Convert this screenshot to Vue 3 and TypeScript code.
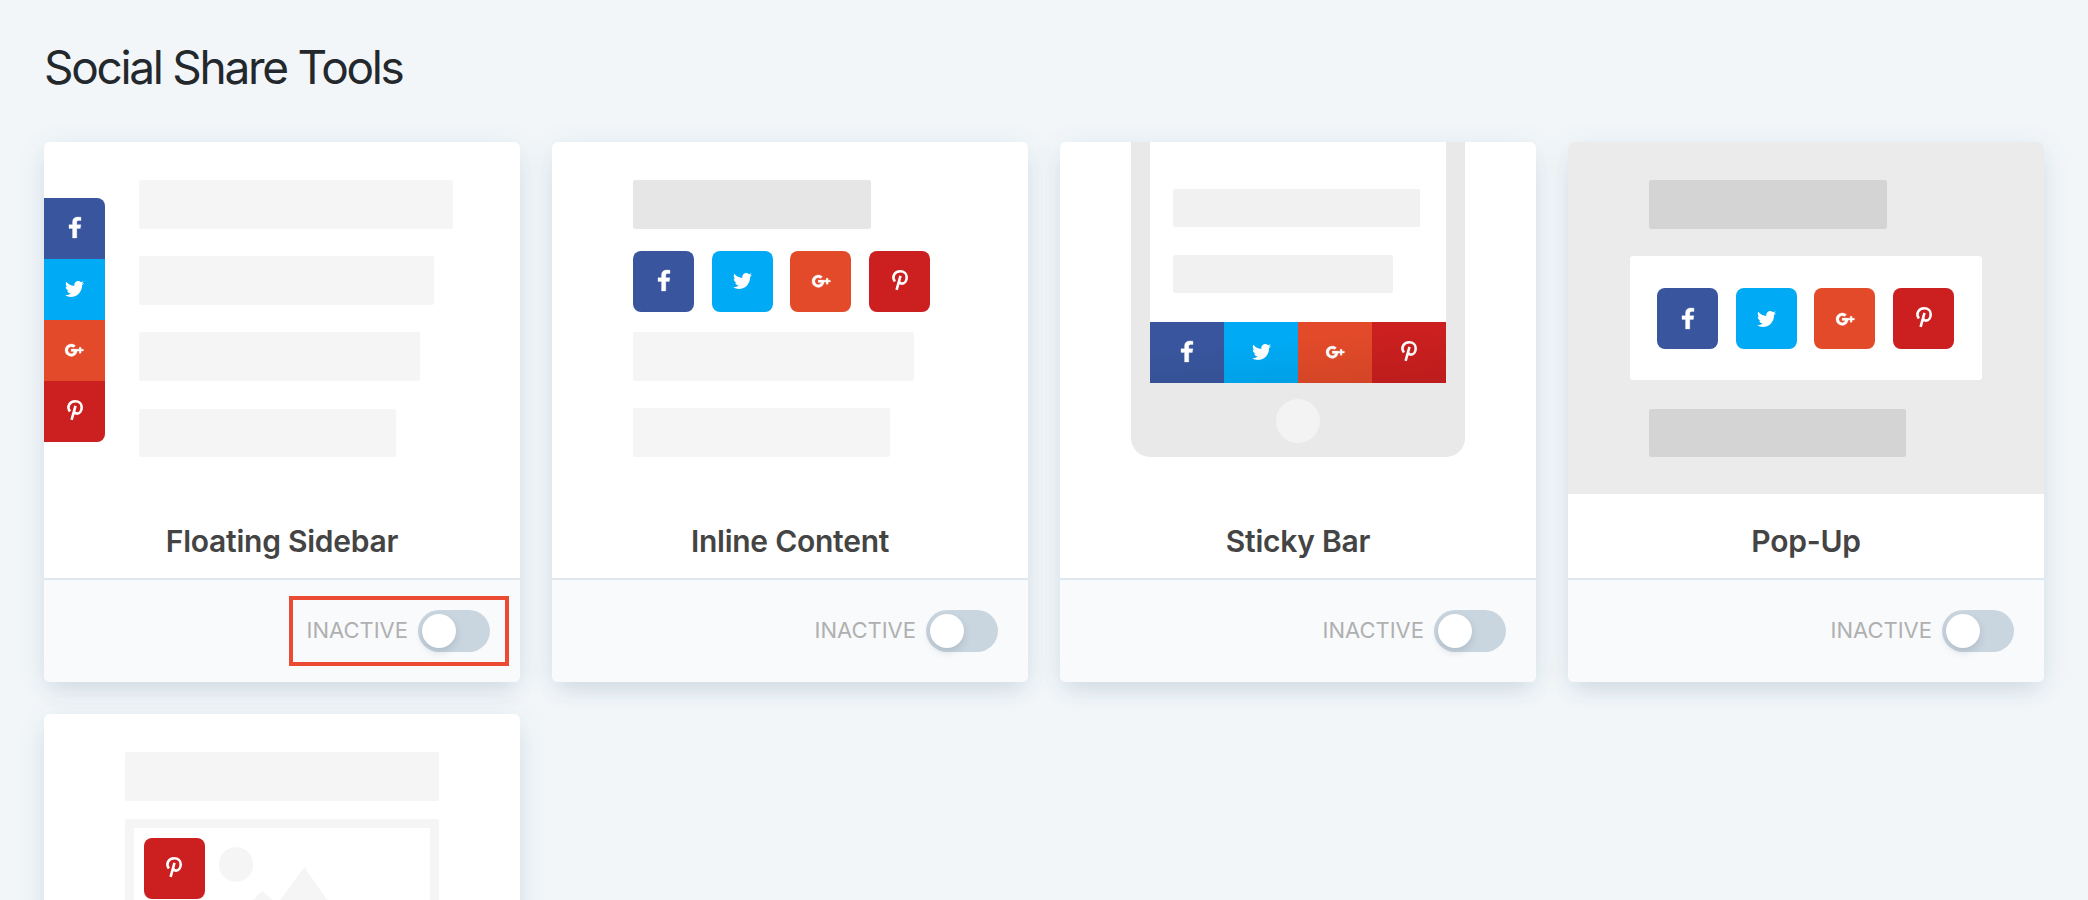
<!--
  Social Share Tools
  Grid of share tool cards: illustration, name and an on/off toggle.
-->
<template>
  <main class="page">
    <h1 class="page-title">Social Share Tools</h1>

    <div class="tools">
      <section v-for="tool in tools" :key="tool.id" class="card">
        <div class="preview" :class="`preview-${tool.id}`">
          <template v-if="tool.id === 'sidebar'">
            <div class="share-stack">
              <span v-for="n in networks" :key="n.id" class="tile" :class="`tile-${n.id}`">
                <svg :class="`icon-${n.id}`" :viewBox="n.viewBox" preserveAspectRatio="none"><path :d="n.path" /></svg>
              </span>
            </div>
            <div class="lines">
              <div v-for="w in [314, 295, 281, 257]" :key="w" class="line" :style="{ width: `${w}px` }"></div>
            </div>
          </template>

          <template v-else-if="tool.id === 'inline'">
            <div class="line line-dark"></div>
            <div class="share-row">
              <span v-for="n in networks" :key="n.id" class="tile" :class="`tile-${n.id}`">
                <svg :class="`icon-${n.id}`" :viewBox="n.viewBox" preserveAspectRatio="none"><path :d="n.path" /></svg>
              </span>
            </div>
            <div class="lines">
              <div v-for="w in [281, 257]" :key="w" class="line" :style="{ width: `${w}px` }"></div>
            </div>
          </template>

          <div v-else-if="tool.id === 'sticky'" class="phone">
            <div class="screen">
              <div v-for="w in [247, 220]" :key="w" class="line" :style="{ width: `${w}px` }"></div>
            </div>
            <div class="sticky-bar">
              <span v-for="n in networks" :key="n.id" class="tile" :class="`tile-${n.id}`">
                <svg :class="`icon-${n.id}`" :viewBox="n.viewBox" preserveAspectRatio="none"><path :d="n.path" /></svg>
              </span>
            </div>
            <div class="home-button"></div>
          </div>

          <template v-else-if="tool.id === 'popup'">
            <div class="line line-short"></div>
            <div class="dialog">
              <div class="share-row">
                <span v-for="n in networks" :key="n.id" class="tile" :class="`tile-${n.id}`">
                  <svg :class="`icon-${n.id}`" :viewBox="n.viewBox" preserveAspectRatio="none"><path :d="n.path" /></svg>
                </span>
              </div>
            </div>
            <div class="line line-long"></div>
          </template>

          <template v-else>
            <div class="line"></div>
            <div class="picture">
              <span class="tile tile-pinterest">
                <svg class="icon-pinterest" :viewBox="pinterest.viewBox" preserveAspectRatio="none"><path :d="pinterest.path" /></svg>
              </span>
              <svg class="scenery" width="170" height="120" viewBox="0 0 170 120">
                <circle cx="31" cy="26.5" r="17.2" />
                <path d="M99.3 29 L161 118 H0 V109 L57.2 53 L72.4 66 Z" />
              </svg>
            </div>
          </template>
        </div>

        <template v-if="tool.name">
          <h2 class="card-title">{{ tool.name }}</h2>

          <div class="card-footer">
            <div class="status" :class="{ highlighted: tool.highlighted }">
              <span class="status-label">{{ tool.active ? 'ACTIVE' : 'INACTIVE' }}</span>
              <button
                type="button"
                class="toggle"
                :class="{ on: tool.active }"
                role="switch"
                :aria-checked="tool.active"
                @click="tool.active = !tool.active"
              >
                <span class="knob"></span>
              </button>
            </div>
          </div>
        </template>
      </section>
    </div>
  </main>
</template>

<script setup lang="ts">
import { reactive } from 'vue'

interface Tool {
  id: 'sidebar' | 'inline' | 'sticky' | 'popup' | 'image'
  name?: string
  active: boolean
  highlighted?: boolean
}

interface Network {
  id: string
  viewBox: string
  path: string
}

const tools = reactive<Tool[]>([
  { id: 'sidebar', name: 'Floating Sidebar', active: false, highlighted: true },
  { id: 'inline', name: 'Inline Content', active: false },
  { id: 'sticky', name: 'Sticky Bar', active: false },
  { id: 'popup', name: 'Pop-Up', active: false },
  { id: 'image', active: false },
])

// Stroked rather than filled, see .icon-pinterest
const pinterest: Network = {
  id: 'pinterest',
  viewBox: '0 0 16 21',
  path: 'M2.9 11.4C-0.6 6.6 2.6 1.3 8.2 1.3C12 1.3 14.7 3.7 14.7 7.2C14.7 10.9 12.7 13.6 10 13.6C8.6 13.6 7.6 12.9 7.2 11.8M8.5 5.8L4.6 19.8',
}

const networks: Network[] = [
  {
    id: 'facebook',
    viewBox: '479 0 864 1664',
    path: 'M1343 12v264h-157q-86 0-116 36t-30 108v189h293l-39 296h-254v759H734V905H479V609h255V391q0-186 104-288.5T1115 0q147 0 228 12z',
  },
  {
    id: 'twitter',
    viewBox: '108 256 1576 1280',
    path: 'M1684 408q-67 98-162 167 1 14 1 42 0 130-38 259.5T1369.5 1125 1185 1335.5t-258 146-323 54.5q-271 0-496-145 35 4 78 4 225 0 401-138-105-2-188-64.5T285 1033q33 5 61 5 43 0 85-11-112-23-185.5-111.5T172 710v-4q68 38 146 41-66-44-105-115t-39-154q0-88 44-163 121 149 294.5 238.5T884 653q-8-38-8-74 0-134 94.5-228.5T1199 256q140 0 236 102 109-21 205-78-37 115-142 178 93-10 186-50z',
  },
  {
    id: 'google',
    viewBox: '0 0 18.4 12.4',
    path: 'M6.2 5.1H12.2C12.7 9.2 10.2 12.4 6.2 12.4A6.2 6.2 0 0 1 6.2 0C7.9 0 9.4 .6 10.5 1.7L8.6 3.5A3.5 3.5 0 1 0 6.2 9.7C7.8 9.7 8.8 8.9 9.2 7.6H6.2ZM14.2 3.3H16.1V5.2H18.4V7.1H16.1V9.2H14.2V7.1H12.2V5.2H14.2Z',
  },
  pinterest,
]
</script>

<style>
body {
  margin: 0;
  background: #f2f6f9;
}
</style>

<style scoped>
.page {
  box-sizing: border-box;
  width: 2088px;
  height: 900px;
  padding: 38px 44px 0;
  overflow: hidden;
  background: #f2f6f9;
  font-family: Inter, 'Liberation Sans', sans-serif;
}

.page-title {
  margin: 0 0 44px;
  color: #23282d;
  font-size: 46px;
  font-weight: 400;
  line-height: 59px;
  height: 60px;
  letter-spacing: -2.3px;
}

.tools {
  display: grid;
  grid-template-columns: repeat(4, 476px);
  gap: 32px;
}

.card {
  height: 540px;
  border-radius: 6px;
  background: #fff;
  box-shadow:
    0 4px 30px rgba(35, 85, 115, 0.08),
    0 12px 22px -6px rgba(35, 85, 115, 0.12);
}

.card-title {
  margin: 0;
  height: 84px;
  color: #444;
  font-size: 30px;
  font-weight: 600;
  line-height: 94px;
  letter-spacing: -0.25px;
  text-align: center;
}

.card-footer {
  box-sizing: border-box;
  display: flex;
  align-items: flex-start;
  justify-content: flex-end;
  height: 104px;
  padding: 16px 11px 0 0;
  border-top: 2px solid #dfe8ee;
  border-radius: 0 0 6px 6px;
  background: #f8fafc;
}

.status {
  box-sizing: border-box;
  display: flex;
  align-items: center;
  justify-content: flex-end;
  gap: 10px;
  width: 220px;
  height: 70px;
  padding-right: 15px;
  border: 4px solid transparent;
}
.status.highlighted {
  border-color: #ec4b33;
}

.status-label {
  margin-bottom: 2px;
  color: #b0b0b0;
  font-size: 22px;
  line-height: 30px;
}

.toggle {
  display: flex;
  width: 72px;
  height: 42px;
  padding: 4px;
  border: 0;
  border-radius: 21px;
  background: #c9d5df;
}
.toggle.on {
  justify-content: flex-end;
  background: #46b450;
}

.knob {
  width: 34px;
  height: 34px;
  border-radius: 50%;
  background: #fff;
  box-shadow: 0 4px 8px rgba(0, 30, 50, 0.13);
}

/* === shared pieces of the illustrations === */
.preview {
  box-sizing: border-box;
  height: 352px;
  padding-top: 38px;
  border-radius: 6px 6px 0 0;
  overflow: hidden;
}

.line {
  height: 48.5px;
  border-radius: 2px;
  background: #f5f5f5;
}

.lines {
  display: flex;
  flex-direction: column;
  gap: 27.7px;
}

.tile {
  display: flex;
  align-items: center;
  justify-content: center;
  width: 61px;
  height: 61px;
  border-radius: 8px;
}
.tile svg {
  display: block;
  fill: #fff;
  overflow: visible;
}
.tile-facebook {
  background: #38559d;
}
.tile-twitter {
  background: #00aaf4;
}
.tile-google {
  background: #e24a29;
}
.tile-pinterest {
  background: #cc1f1f;
}
.tile .icon-facebook {
  width: 12px;
  height: 21px;
  margin-bottom: 1px;
  stroke: #fff;
  stroke-width: 24;
}
.tile .icon-twitter {
  width: 19px;
  height: 16px;
}
.tile .icon-google {
  width: 18.4px;
  height: 12.4px;
  stroke: #fff;
  stroke-width: 0.3;
}
.tile .icon-pinterest {
  width: 16px;
  height: 21px;
  margin-bottom: 2px;
  fill: none;
  stroke: #fff;
  stroke-width: 2.6;
}

.share-row {
  display: flex;
  gap: 17.7px;
}

/* === floating sidebar === */
.preview-sidebar {
  display: flex;
  gap: 34px;
}
.share-stack {
  height: 244px;
  margin-top: 17.7px;
  border-radius: 0 8px 8px 0;
  overflow: hidden;
}
.share-stack .tile {
  border-radius: 0;
}

/* === inline content === */
.preview-inline {
  padding-left: 81px;
}
.line-dark {
  width: 238px;
  background: #e6e6e6;
}
.preview-inline .share-row {
  margin: 22px 0 20.8px;
}

/* === sticky bar === */
.preview-sticky {
  padding-top: 0;
}
.phone {
  box-sizing: border-box;
  width: 333.4px;
  height: 314.7px;
  margin: 0 auto;
  padding: 0 19px;
  border-radius: 0 0 19px 19px;
  background: #e9e9e9;
}
.screen {
  box-sizing: border-box;
  display: flex;
  flex-direction: column;
  gap: 28px;
  height: 179.7px;
  padding: 47px 0 0 23px;
  background: #fff;
}
.screen .line {
  height: 38px;
  background: #f1f1f1;
}
.sticky-bar {
  position: relative;
  display: flex;
}
.sticky-bar::after {
  content: '';
  position: absolute;
  inset: 0;
  background: linear-gradient(175deg, transparent 35%, rgba(0, 0, 0, 0.08) 100%);
}
.sticky-bar .tile {
  flex: 1;
  border-radius: 0;
}
.home-button {
  width: 44px;
  height: 44px;
  margin: 16.3px auto 0;
  border-radius: 50%;
  background: #f3f3f3;
}

/* === pop-up === */
.preview-popup {
  background: #ebebeb;
}
.preview-popup .line {
  margin-left: 81px;
  background: #d4d4d4;
}
.preview-popup .line-short {
  width: 238px;
}
.preview-popup .line-long {
  width: 257px;
}
.dialog {
  box-sizing: border-box;
  width: 352px;
  height: 124px;
  margin: 27.5px auto 28.5px;
  padding: 32.3px 0 0 27px;
  border-radius: 3px;
  background: #fff;
}

/* === image sharing === */
.preview-image .line {
  width: 314px;
  margin: 0 auto;
}
.picture {
  box-sizing: border-box;
  display: flex;
  width: 314px;
  height: 220px;
  margin: 18.5px auto 0;
  padding: 9.5px;
  border: 9px solid #f5f5f5;
  border-radius: 2px;
}
.scenery {
  fill: #f5f5f5;
}
</style>
